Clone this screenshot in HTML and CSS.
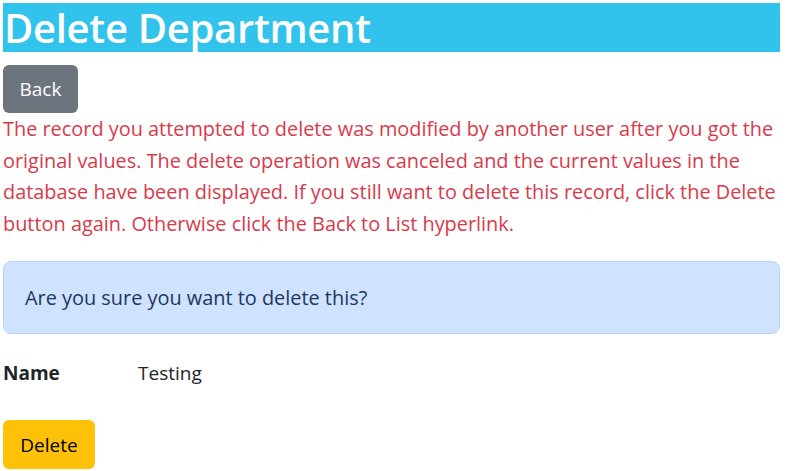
FILE: index.html
```html
<!DOCTYPE html>
<html>
<head>
<meta charset="utf-8">
<link rel="stylesheet" href="styles.css">
</head>
<body>
<h1 class="title">Delete Department</h1>
<a class="btn btn-back" href="#">Back</a>
<p class="error">The record you attempted to delete was modified by another user after you got the original values. The delete operation was canceled and the current values in the database have been displayed. If you still want to delete this record, click the Delete button again. Otherwise click the Back to List hyperlink.</p>
<div class="alert">Are you sure you want to delete this?</div>
<dl class="details">
  <dt>Name</dt>
  <dd>Testing</dd>
</dl>
<button class="btn btn-delete" type="button">Delete</button>
</body>
</html>
```
FILE: styles.css
```css
html, body {
  margin: 0;
  padding: 0;
}
body {
  padding: 3px 7px 0 3px;
  font-family: "Open Sans", "Noto Sans", sans-serif;
  font-size: 19px;
  color: #212529;
  background: #fff;
}
.title {
  margin: 0;
  background: #31c3eb;
  color: #fff;
  font-size: 40px;
  font-weight: 600;
  line-height: 49px;
  padding-left: 1px;
  letter-spacing: -0.3px;
}
.btn {
  display: inline-flex;
  align-items: center;
  justify-content: center;
  box-sizing: border-box;
  border: none;
  border-radius: 6px;
  font-family: inherit;
  font-size: 19px;
  text-decoration: none;
}
.btn-back {
  margin-top: 13px;
  width: 75px;
  height: 48px;
  background: #6c757d;
  color: #fff;
}
.error {
  margin: 0;
  color: #d93a4a;
  font-size: 19.9px;
  line-height: 31.5px;
}
.alert {
  margin-top: 22px;
  box-sizing: border-box;
  height: 73px;
  display: flex;
  align-items: center;
  padding: 0 21px;
  background: #cfe2ff;
  border: 1px solid #b6d4fe;
  border-radius: 8px;
  color: #1b3760;
  font-size: 19.9px;
}
.details {
  display: flex;
  margin: 24px 0 0;
  line-height: 31px;
}
.details dt {
  width: 135px;
  font-weight: 700;
}
.details dd {
  margin: 0;
}
.btn-delete {
  margin-top: 31px;
  width: 92px;
  height: 49px;
  background: #ffc107;
  color: #000;
}
```
